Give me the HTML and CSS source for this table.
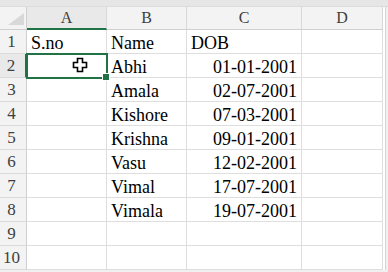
FILE: index.html
```html
<!DOCTYPE html>
<html>

<head>
    <meta charset="utf-8" />
    <title>Sheet1</title>
    <meta name="viewport" content="width=device-width, initial-scale=1">
    <link rel="stylesheet" href="styles.css">
</head>

<body>
    <div class="band"></div>
    <div class="sheet">
        <!-- column headers -->
        <div class="corner"><span class="tri"></span></div>
        <div class="colhead active">A</div>
        <div class="colhead">B</div>
        <div class="colhead">C</div>
        <div class="colhead">D</div>

        <div class="rowhead">1</div>
        <div class="cell">S.no</div>
        <div class="cell">Name</div>
        <div class="cell">DOB</div>
        <div class="cell"></div>

        <div class="rowhead active">2</div>
        <div class="cell selected">
            <!-- thick cross pointer -->
            <svg class="pointer" width="16" height="16" viewBox="0 0 16 16">
                <path d="M5.5 1.5h5v4h4v5h-4v4h-5v-4h-4v-5h4z" fill="#fff" stroke="#000" stroke-width="1.6" stroke-linejoin="miter" />
            </svg>
        </div>
        <div class="cell">Abhi</div>
        <div class="cell num">01-01-2001</div>
        <div class="cell"></div>

        <div class="rowhead">3</div>
        <div class="cell"></div>
        <div class="cell">Amala</div>
        <div class="cell num">02-07-2001</div>
        <div class="cell"></div>

        <div class="rowhead">4</div>
        <div class="cell"></div>
        <div class="cell">Kishore</div>
        <div class="cell num">07-03-2001</div>
        <div class="cell"></div>

        <div class="rowhead">5</div>
        <div class="cell"></div>
        <div class="cell">Krishna</div>
        <div class="cell num">09-01-2001</div>
        <div class="cell"></div>

        <div class="rowhead">6</div>
        <div class="cell"></div>
        <div class="cell">Vasu</div>
        <div class="cell num">12-02-2001</div>
        <div class="cell"></div>

        <div class="rowhead">7</div>
        <div class="cell"></div>
        <div class="cell">Vimal</div>
        <div class="cell num">17-07-2001</div>
        <div class="cell"></div>

        <div class="rowhead">8</div>
        <div class="cell"></div>
        <div class="cell">Vimala</div>
        <div class="cell num">19-07-2001</div>
        <div class="cell"></div>

        <div class="rowhead">9</div>
        <div class="cell"></div>
        <div class="cell"></div>
        <div class="cell"></div>
        <div class="cell"></div>

        <div class="rowhead">10</div>
        <div class="cell"></div>
        <div class="cell"></div>
        <div class="cell"></div>
        <div class="cell"></div>
    </div>
</body>

</html>
```

FILE: styles.css
```css
* {
    box-sizing: border-box;
}

body {
    margin: 0;
    background: #f0f0f0;
    font-family: "Liberation Serif", "Times New Roman", serif;
    overflow: hidden;
}

.band {
    height: 7px;
    background: #e6e6e6;
    border-bottom: 1px solid #dcdcdc;
}

/* the grid: row header + columns A..D */
.sheet {
    display: grid;
    grid-template-columns: 27px 80px 80px 115px 81px;
    grid-template-rows: 23px;
    grid-auto-rows: 24px;
    width: 386px;
    background: #fff;
    border-right: 1px solid #d4d4d4;
}

.corner {
    position: relative;
    background: #f3f3f3;
    border-right: 1px solid #cfcfcf;
    border-bottom: 1px solid #cfcfcf;
}

.tri {
    position: absolute;
    right: 2px;
    bottom: 4px;
    width: 0;
    height: 0;
    border-left: 16px solid transparent;
    border-bottom: 12px solid #d8d8d8;
}

.colhead {
    display: flex;
    align-items: flex-end;
    justify-content: center;
    padding-bottom: 2px;
    background: #f3f3f3;
    border-right: 1px solid #d8d8d8;
    border-bottom: 1px solid #cfcfcf;
    font-size: 16px;
    line-height: 18px;
    color: #404040;
}

.colhead.active {
    background: #e9e9e9;
    border-bottom: 2px solid #217346;
    padding-bottom: 1px;
}

.rowhead {
    display: flex;
    align-items: flex-end;
    justify-content: center;
    padding-bottom: 2px;
    padding-right: 3px;
    background: #f3f3f3;
    border-right: 1px solid #cfcfcf;
    border-bottom: 1px solid #dadada;
    font-size: 17px;
    line-height: 19px;
    color: #404040;
}

.rowhead.active {
    background: #e9e9e9;
    border-right: 2px solid #217346;
}

.cell {
    display: flex;
    align-items: flex-end;
    padding: 0 4px 0 4px;
    border-right: 1px solid #dedede;
    border-bottom: 1px solid #dedede;
    font-size: 18px;
    line-height: 20px;
    color: #000;
    white-space: nowrap;
}

.cell.num {
    justify-content: flex-end;
}

.cell.selected {
    position: relative;
    outline: 2px solid #217346;
    outline-offset: -1px;
}

/* fill handle */
.cell.selected::after {
    content: "";
    position: absolute;
    right: -4px;
    bottom: -4px;
    width: 6px;
    height: 6px;
    background: #217346;
    border: 1px solid #fff;
}

.pointer {
    position: absolute;
    left: 45px;
    top: 3px;
}
```
